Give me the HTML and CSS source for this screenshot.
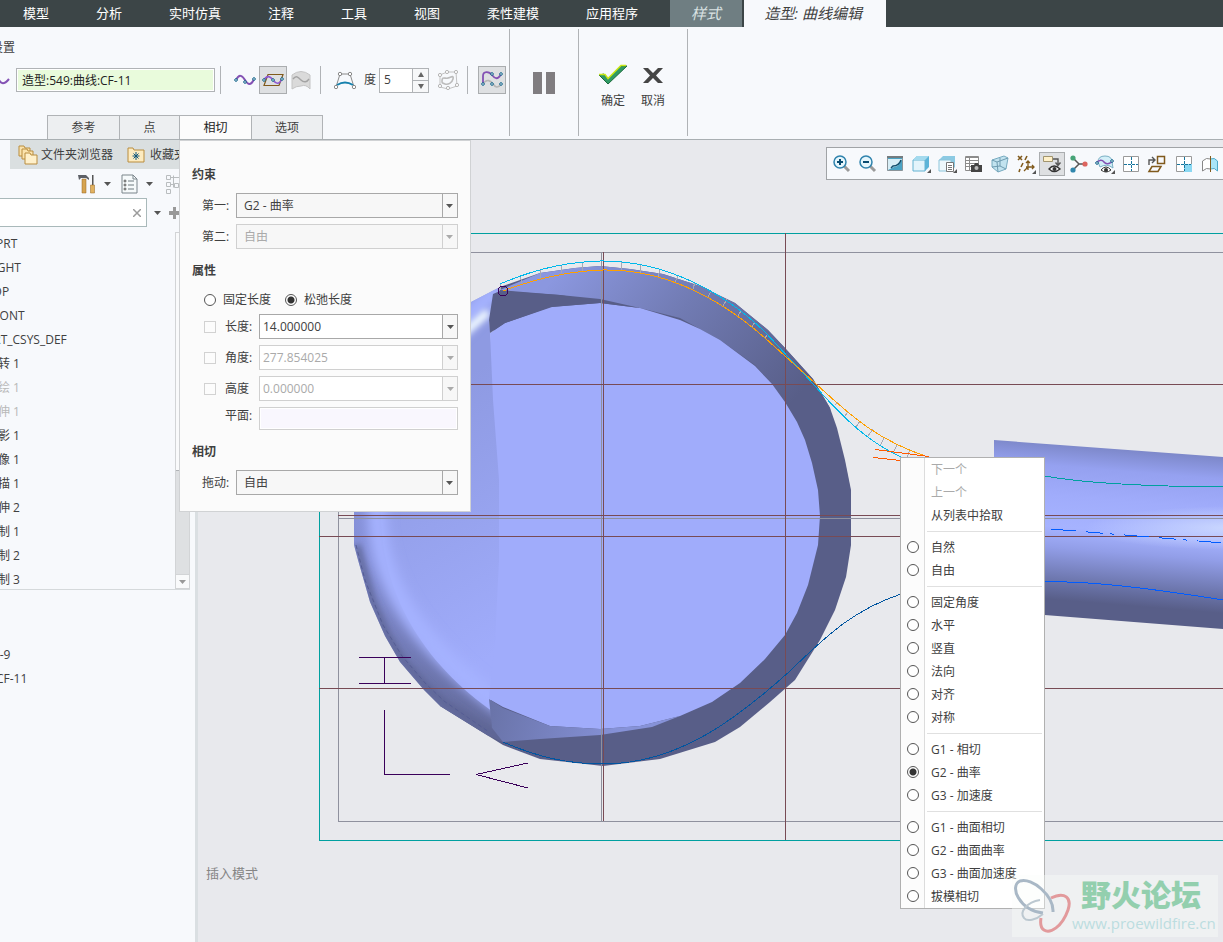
FILE: index.html
```html
<!DOCTYPE html>
<html lang="zh-CN">
  <head>
    <meta charset="UTF-8" />
    <meta name="viewport" content="width=device-width, initial-scale=1.0" />
    <title>造型: 曲线编辑</title>
    <link rel="stylesheet" href="styles.css">
  </head>
  <body>
    <nav class="menubar">
      <a href="#">模型</a>
      <a href="#">分析</a>
      <a href="#">实时仿真</a>
      <a href="#">注释</a>
      <a href="#">工具</a>
      <a href="#">视图</a>
      <a href="#">柔性建模</a>
      <a href="#">应用程序</a>
      <a href="#" class="style-tab">样式</a>
      <a href="#" class="current-tab">造型: 曲线编辑</a>
    </nav>

    <header class="ribbon">
      <div class="settings">
        <div class="caption">设置</div>
        <div class="tools">
          <svg class="lead" width="20" height="20" viewBox="0 0 20 20"><path d="M0 10c4-6 6-4 8 0s5 5 10-1" fill="none" stroke="#8452b4" stroke-width="2"/></svg>
          <input class="curve-name" type="text" value="造型:549:曲线:CF-11" aria-label="曲线" />
          <i class="sep"></i>
          <button class="tool" aria-label="自由曲线">
            <svg width="22" height="20" viewBox="0 0 22 20"><path d="M2 10c3-6 6-5 9 0s6 6 9-1" fill="none" stroke="#8452b4" stroke-width="2"/><g fill="#fff" stroke="#0a5f87"><circle cx="2" cy="10" r="1.3"/><circle cx="11" cy="12" r="1.3"/><circle cx="20" cy="9" r="1.3"/></g></svg>
          </button>
          <button class="tool on" aria-label="平面曲线">
            <svg width="22" height="20" viewBox="0 0 22 20"><path d="M2 15.500L6 4.500h15l-4 11z" fill="none" stroke="#805a1c" stroke-width="1.200"/><path d="M2 10c3-5 6-4 9 0s6 5 9-1" fill="none" stroke="#8c55d0" stroke-width="1.600"/><g fill="#fff" stroke="#0a5f87"><circle cx="2" cy="10" r="1.3"/><circle cx="11" cy="10" r="1.3"/><circle cx="20" cy="9" r="1.3"/></g></svg>
          </button>
          <button class="tool" aria-label="曲面上的曲线" disabled>
            <svg width="22" height="20" viewBox="0 0 22 20"><path d="M2 5q9-7 18 0v14q-4-5-9-3-5 0-9 3z" fill="#dadada" stroke="#c4c4c4"/><path d="M3 9c3-4 5-2 8 1s6 2 8-1" fill="none" stroke="#a3a3a3" stroke-width="1.4"/></svg>
          </button>
          <i class="sep"></i>
          <button class="tool" aria-label="控制点">
            <svg width="22" height="20" viewBox="0 0 22 20"><path d="M2 17L6 4h10l4 13" fill="none" stroke="#8a8a8a"/><path d="M3 15q8-5 16 0" fill="none" stroke="#1681ad" stroke-width="2"/><g fill="#fff" stroke="#888"><circle cx="2" cy="17" r="1.7"/><circle cx="6" cy="4" r="1.7"/><circle cx="16" cy="4" r="1.7"/><circle cx="20" cy="17" r="1.7"/></g></svg>
          </button>
          <label class="degree">度
            <span class="spin">
              <input type="text" value="5" />
              <span class="steps">
                <button aria-label="增加"><svg width="6" height="5"><path d="M3 0l3 5H0z"/></svg></button>
                <button aria-label="减少"><svg width="6" height="5"><path d="M0 0h6L3 5z"/></svg></button>
              </span>
            </span>
          </label>
          <button class="tool" aria-label="按比例更新" disabled>
            <svg width="22" height="20" viewBox="0 0 22 20"><path d="M3 5l7-3 9 0 1 14-9 3-8-2z" fill="none" stroke="#c3c3c3"/><path d="M5 11c0-5 3-2 6-3s6-3 5 1-5 6-8 5-3-1-3-3z" fill="none" stroke="#bcbcbc" stroke-width="1.6"/><g fill="#fff" stroke="#b5b5b5"><circle cx="3" cy="5" r="1.6"/><circle cx="10" cy="2" r="1.6"/><circle cx="19" cy="2" r="1.6"/><circle cx="20" cy="15" r="1.6"/><circle cx="11" cy="18" r="1.6"/><circle cx="3" cy="16" r="1.6"/></g></svg>
          </button>
          <i class="sep"></i>
          <button class="tool on last" aria-label="编辑曲线">
            <svg width="22" height="20" viewBox="0 0 22 20"><path d="M2 14c4-6 8-3 10 0s5 5 8 0" fill="none" stroke="#b5b5b5" stroke-width="1.6"/><path d="M2 13V6c0-5 6-5 9-1s6 5 9-1" fill="none" stroke="#8452b4" stroke-width="1.8"/><g fill="#fff" stroke="#0a5f87"><circle cx="2" cy="14" r="1.3"/><circle cx="11" cy="4" r="1.3"/><circle cx="20" cy="4" r="1.3"/><circle cx="11" cy="14" r="1.3"/><circle cx="20" cy="14" r="1.3"/></g></svg>
          </button>
        </div>
        <div class="tabs">
          <button>参考</button>
          <button class="narrow">点</button>
          <button class="active">相切</button>
          <button>选项</button>
        </div>
      </div>
      <div class="pause">
        <button class="plain" aria-label="暂停"><svg width="22" height="22"><path d="M0 0h9v22H0zM13 0h9v22h-9z" fill="#807d80"/></svg></button>
      </div>
      <div class="finish">
        <button class="plain">
          <svg width="30" height="22" viewBox="0 0 30 22"><path d="M1 11l5-1 4 5L23 2h6L10 20z" fill="#2f9a64" stroke="#1c6b3c"/><path d="M1 10.500h6l3 4L23 1.500h5" fill="none" stroke="#c8e614" stroke-width="1.500"/></svg>
          确定
        </button>
        <button class="plain">
          <svg width="30" height="22" viewBox="0 0 30 22"><path d="M5 4h5l5 5 5-5h5l-7 7.500 7 7.500h-5l-5-5-5 5H5l7-7.500z" fill="#454545"/></svg>
          取消
        </button>
      </div>
    </header>

    <main>
      <aside class="sidebar">
        <div class="side-tabs">
          <a href="#">
            <svg width="20" height="20" viewBox="0 0 20 20"><g fill="#fbe3ad" stroke="#b98d3e"><path d="M1 2V1h5l1 2h5v8H1z"/><path d="M4 6V4h5l1 2h5v8H4z"/><path d="M7 10V8h5l1 2h6v9H7z" fill="#fff0ca"/></g></svg>
            文件夹浏览器
          </a>
          <a href="#" class="fav">
            <svg width="18" height="16" viewBox="0 0 18 16"><path d="M1 2V1h5l1 2h10v12H1z" fill="#fdebc0" stroke="#b98d3e"/><path d="M9 5v8M5.500 9h7M6.500 6.500l5 5M11.500 6.500l-5 5" stroke="#10567c"/></svg>
            收藏夹
          </a>
        </div>
        <div class="side-tools">
          <button class="plain" aria-label="设置">
            <svg width="18" height="20" viewBox="0 0 18 20"><path d="M0 1h8l3 3v2L8 4H3L1 6z" fill="#5d6066"/><path d="M4 5h4v14H4z" fill="#d6a450" stroke="#946622" stroke-width="0.500"/><path d="M14 1h1.500v10H14z" fill="#555"/><path d="M12.500 11h4v8h-4z" fill="#e2b260" stroke="#946622" stroke-width="0.500"/></svg>
            <svg class="arrow" width="7" height="4"><path d="M0 0h7L3.500 4z"/></svg>
          </button>
          <button class="plain" aria-label="显示">
            <svg width="17" height="20" viewBox="0 0 17 20"><path d="M1 1h11l4 4v14H1z" fill="#f6fafb" stroke="#7b858b"/><path d="M12 1v4h4" fill="none" stroke="#7b858b"/><path d="M7 7h6M7 11h6M7 15h6" stroke="#6f7b80"/><g fill="none" stroke="#555"><circle cx="4" cy="7" r="1"/><circle cx="4" cy="11" r="1"/><circle cx="4" cy="15" r="1"/></g></svg>
            <svg class="arrow" width="7" height="4"><path d="M0 0h7L3.500 4z"/></svg>
          </button>
          <svg width="18" height="20" viewBox="0 0 18 20"><g fill="none" stroke="#b9bdbf"><path d="M3.500 1.500h4v4h-4zM3.500 8.500h4v4h-4zM3.500 15.500h4v4h-4zM11.500 9.500h4v4h-4zM10.500 1.500v12M7.500 3.500h10M7.500 10.500h4"/></g></svg>
        </div>
        <div class="search">
          <div class="search-box">
            <input type="text" aria-label="搜索" />
            <button class="plain" aria-label="清除"><svg width="8" height="8"><path d="M0 0l8 8M8 0l-8 8" stroke="#9c9c9c" stroke-width="1.500"/></svg></button>
          </div>
          <svg class="arrow" width="7" height="4"><path d="M0 0h7L3.500 4z"/></svg>
          <svg width="12" height="12"><path d="M5 0h3v4h4v4H8v4H5V8H1V4h4z" fill="#999"/></svg>
        </div>
        <div class="tree">
          <ul>
            <li class="root">PRT</li>
            <li>RIGHT</li>
            <li>TOP</li>
            <li>FRONT</li>
            <li>PRT_CSYS_DEF</li>
            <li>旋转 1</li>
            <li class="dim">草绘 1</li>
            <li class="dim">拉伸 1</li>
            <li>投影 1</li>
            <li>镜像 1</li>
            <li>扫描 1</li>
            <li>拉伸 2</li>
            <li>复制 1</li>
            <li>复制 2</li>
            <li>复制 3</li>
          </ul>
          <div class="scrollbar">
            <i class="thumb"></i>
            <button aria-label="向下滚动"><svg class="arrow" width="7" height="4"><path d="M0 0h7L3.500 4z"/></svg></button>
          </div>
        </div>
        <ul class="curves">
          <li>CF-9</li>
          <li class="root">CF-11</li>
        </ul>
      </aside>

      <section class="canvas">
        <svg class="scene" viewBox="198 140 1025 802" preserveAspectRatio="xMinYMin slice">
          <defs>
            <linearGradient id="band" gradientUnits="userSpaceOnUse" x1="560" y1="270" x2="760" y2="440">
              <stop offset="0" stop-color="#8b97df"/>
              <stop offset="0.450" stop-color="#717bb3"/>
              <stop offset="1" stop-color="#585e88"/>
            </linearGradient>
            <linearGradient id="rim" gradientUnits="userSpaceOnUse" x1="0" y1="280" x2="0" y2="745">
              <stop offset="0" stop-color="#8995dc"/>
              <stop offset="0.600" stop-color="#8590d8"/>
              <stop offset="1" stop-color="#5f6694"/>
            </linearGradient>
            <linearGradient id="left" gradientUnits="userSpaceOnUse" x1="390" y1="420" x2="520" y2="640">
              <stop offset="0" stop-color="#8e9ae2"/>
              <stop offset="1" stop-color="#a0acfb"/>
            </linearGradient>
            <linearGradient id="wedge" gradientUnits="userSpaceOnUse" x1="489" y1="705" x2="620" y2="735">
              <stop offset="0" stop-color="#6973a8"/>
              <stop offset="1" stop-color="#8692d8"/>
            </linearGradient>
            <linearGradient id="handle" gradientUnits="userSpaceOnUse" x1="1130" y1="449" x2="1116" y2="622">
              <stop offset="0" stop-color="#7c87c8"/>
              <stop offset="0.130" stop-color="#95a1f0"/>
              <stop offset="0.300" stop-color="#a0acfb"/>
              <stop offset="0.480" stop-color="#a6b3ff"/>
              <stop offset="0.600" stop-color="#929ee8"/>
              <stop offset="0.820" stop-color="#666fa2"/>
              <stop offset="0.900" stop-color="#585e88"/>
            </linearGradient>
            <radialGradient id="shine">
              <stop offset="0" stop-color="#cbd8ff"/>
              <stop offset="1" stop-color="#cbd8ff" stop-opacity="0"/>
            </radialGradient>
            <filter id="soft" x="-30%" y="-30%" width="160%" height="160%"><feGaussianBlur stdDeviation="6"/></filter>
            <filter id="glow" x="-60%" y="-60%" width="220%" height="220%"><feGaussianBlur stdDeviation="3"/></filter>
            <clipPath id="body"><path d="M354 545V490L363 445 385 390 420 342 471 302 500 287 489 320 502 480V560L491 700 492 728 503 742 487 735 440 706 424 690 400 662 385 636 370 602 358 560z"/></clipPath>
            <clipPath id="tube"><path d="M994 440L1223 457V629L994 611z"/></clipPath>
          </defs>

          <!-- disc -->
          <path d="M500 287L540 273 575 268 600 266 630 269 663 274 700 286 735 303 768 330 785 348 813 379 830 408 837 428 845 460 851 490V545L846 577 835 610 820 640 795 680 770 702 740 727 715 742 660 759 603 766 540 759 503 745 440 706z" fill="#585e88"/>
          <path d="M500 290L540 273 575 268 600 266 630 269 663 274 700 286 735 303 768 330 785 348 813 379 830 408 835 440H790L772 384 755 365 720 340 680 318 640 308 560 295z" fill="url(#band)"/>
          <path d="M354 545V490L363 445 385 390 420 342 471 302 500 287 489 320 502 480V560L491 700 492 728 503 742 487 735 440 706 424 690 400 662 385 636 370 602 358 560z" fill="url(#rim)"/>
          <g clip-path="url(#body)">
            <path d="M520 285C420 350 382 430 381 516C382 600 430 675 512 724L520 600V400z" fill="url(#left)"/>
            <path d="M500 288C410 360 378 430 377 516C379 590 424 650 505 708" fill="none" stroke="#a5b2ff" stroke-width="19" filter="url(#soft)"/>
            <path d="M488 312L456 340" stroke="#f2fbff" stroke-width="8" filter="url(#glow)"/>
            <path d="M357 545L372 600 387 634 402 659 426 686 444 702 489 731 515 745" fill="none" stroke="#5d6594" stroke-width="6" filter="url(#glow)"/>
            <path d="M356 545L365 580 383 625 402 656 426 684 444 701 489 732" fill="none" stroke="#555d94" stroke-dasharray="4 3"/>
          </g>
          <path d="M490 333L505 323 550 307 600 303 640 308 680 320 700 329 720 340 755 366 772 384 785 402 797 422 805 440 812 463 818 490 820 516 818 545 808 585 797 613 785 635 765 659 740 683 712 702 680 716 640 726 600 729 550 726 503 707 489 699 495 640 499 560V480L493 400z" fill="#a0acfb"/>
          <path d="M493 294L500 291 560 295 600 299 640 308 600 303 552 307 505 323 490 333 489 320z" fill="#585e88"/>
          <path d="M489 699L503 708 550 726 600 729 640 726 680 716 652 727 600 735 540 739 503 742 492 728z" fill="url(#wedge)"/>

          <!-- handle -->
          <path d="M994 440L1223 457V629L994 611z" fill="url(#handle)"/>
          <g clip-path="url(#tube)"><ellipse cx="1235" cy="528" rx="150" ry="22" fill="url(#shine)"/></g>

          <!-- datum planes -->
          <g class="datum">
            <path d="M1223 233.500H319.500V840.500H1223" stroke="#00a0a0"/>
            <path d="M1223 252.500H338.500V821.500H1223M601.500 252V821M338 518.500H1223" stroke="#8f919e"/>
            <path d="M319 384.500H1223M319 536.500H1223M319 688.500H1223M338 515.500H1223M603.500 252V821M785.500 233V840" stroke="#784b55"/>
            <path d="M359 657.500H411M359 683.500H411M384.500 658V683M384.500 710V774.500H450M528 763L476 774.500 528 788" stroke="#3a005a"/>
          </g>

          <!-- curves -->
          <g class="curve">
            <path d="M503 742C540 758 570 764 603 764C680 764 740 716 790 671C830 632 856 609 901 594" stroke="#0055a0"/>
            <path d="M1045 476Q1100 486 1223 487" stroke="#00a0a0"/>
            <path d="M1051 529L1223 543" stroke="#005cff" stroke-dasharray="25 10 17 7 4 10"/>
            <path d="M1045 582Q1100 580 1223 600" stroke="#005cff"/>
            <path d="M500 284V290M520 276L522 283M540 270L541 278M561 266V273M582 263V271M621 262V271M641 265L640 273M660 269L658 277M678 275L675 283M695 282L693 289M711 291L708 297M727 299L723 306M741 311L738 316M755 322L752 327M768 334L765 338M838 402L835 405M848 412L845 416M860 421L856 427M873 429L868 436M884 438L880 446M897 445L893 453M910 450L907 457" stroke="#a8a8b4"/>
            <path d="M500 284C540 267 570 262 600 261C665 260 725 293 765 332L815 386C845 420 870 443 901 457" stroke="#00b9eb"/>
            <path d="M503 291C540 277 570 271 603 270C670 269 725 303 765 338L815 383C855 420 880 441 928 457" stroke="#ffa000"/>
            <path d="M875 449.500L929 456.500M873 457.500L901 460.500" stroke="#ff5a00"/>
            <circle cx="503" cy="291" r="5" stroke="#3a005a"/>
          </g>
        </svg>

        <p class="mode">插入模式</p>

        <div class="view-tools">
          <button aria-label="放大"><svg viewBox="0 0 20 20"><path d="M11 11l6 6" stroke="#9a9a9a" stroke-width="3"/><circle cx="8" cy="8" r="6" fill="#e6f6fc" stroke="#2f83ad" stroke-width="1.500"/><path d="M5 8h6M8 5v6" stroke="#094c70" stroke-width="2"/></svg></button>
          <button aria-label="缩小"><svg viewBox="0 0 20 20"><path d="M11 11l6 6" stroke="#9a9a9a" stroke-width="3"/><circle cx="8" cy="8" r="6" fill="#e6f6fc" stroke="#2f83ad" stroke-width="1.500"/><path d="M5 8h6" stroke="#094c70" stroke-width="2"/></svg></button>
          <button aria-label="重画"><svg viewBox="0 0 20 20"><path d="M2.500 2.500h15v14h-15z" fill="#4ba3c4" stroke="#8b9499"/><path d="M3 5h14q-2 7-8 8l-6 3z" fill="#d8eef6"/><path d="M2 2h16v2H2z" fill="#747c80"/><path d="M16 6q-2 6-8 6l-2 2" fill="none" stroke="#14506d" stroke-width="1.500"/></svg></button>
          <button aria-label="显示样式"><svg viewBox="0 0 20 20"><path d="M2 6l4-4h12v11l-4 4H2z" fill="#5db4d8"/><path d="M2 6h12v11H2z" fill="#e3f4fb" stroke="#65b3d2"/><path d="M2 6l4-4h12l-4 4z" fill="#a4daee"/><path d="M20 15v4h-4z" fill="#555"/></svg></button>
          <button aria-label="已保存方向"><svg viewBox="0 0 20 20"><path d="M2 6l4-4h12v11l-4 4H2z" fill="#8ccae3"/><path d="M2 6h12v11H2z" fill="#eef8fc" stroke="#8cc5db"/><path d="M9.500 8.500h7v9h-7z" fill="#fff" stroke="#777"/><path d="M11 11.500h4M11 13.500h4M11 15.500h4" stroke="#777"/><path d="M20 15v4h-4z" fill="#555"/></svg></button>
          <button aria-label="视图管理器"><svg viewBox="0 0 20 20"><path d="M2.500 2.500h13v14h-13z" fill="#fff" stroke="#8c8c8c"/><path d="M2 3.500h14M2 6.500h14M2 9.500h14M2 12.500h14M6.500 2v14" stroke="#8c8c8c"/><path d="M8 11h3l1-2h3l1 2h3v7H8z" fill="#444"/><circle cx="13.500" cy="14" r="2" fill="#bbb"/></svg></button>
          <button aria-label="透视图"><svg viewBox="0 0 20 20"><path d="M2 6l12-4 4 2-2 11-8 3-6-5z" fill="#c2e3ef" stroke="#77abc0"/><path d="M2 6l5 2 11-4M7 8l1 10M10 4v8l6 3M2 13l8-1" fill="none" stroke="#6e9bb0"/></svg></button>
          <button aria-label="基准显示"><svg viewBox="0 0 20 20"><path d="M2 2l4 4M6 2L2 6M11 2l-2 4M7 9l-2 4M4 15l-1 3" stroke="#805a1c" stroke-width="1.600"/><path d="M12 8v8M10 13h8M12 13l-4 4M10 9l2-2 2 2M16 11l2 2-2 2" fill="none" stroke="#805a1c" stroke-width="1.300"/><path d="M20 16v4h-4z" fill="#555"/></svg></button>
          <button class="on" aria-label="注释显示"><svg viewBox="0 0 20 20"><path d="M1.500 2.500h9v5h-9z" fill="#fff1c9" stroke="#a1956f"/><path d="M11 5h5v6M13.500 8.500l2.500 3 2.500-3" fill="none" stroke="#555" stroke-width="1.400"/><path d="M7 15q5-6 11 0-6 5-11 0z" fill="#fff" stroke="#333" stroke-width="1.400"/><circle cx="12.500" cy="15" r="2" fill="#333"/></svg></button>
          <button aria-label="旋转中心"><svg viewBox="0 0 20 20"><path d="M4 4l6 6h7M10 10l-6 6" fill="none" stroke="#555" stroke-width="1.500"/><circle cx="4" cy="4" r="2.600" fill="#46a477"/><circle cx="4" cy="16" r="2.600" fill="#3187ad"/><circle cx="16" cy="10" r="2.600" fill="#dd655f"/></svg></button>
          <button aria-label="曲线显示"><svg viewBox="0 0 20 20"><path d="M3 8q0-6 7-6t7 6l1 6q-6-5-13-1z" fill="#d3eff8" stroke="#79afc4"/><path d="M1 9q5-5 8-1t9-1" fill="none" stroke="#8452b4" stroke-width="1.600"/><g fill="#fff" stroke="#0a5f87"><circle cx="2" cy="9" r="1.300"/><circle cx="17" cy="7" r="1.300"/></g><path d="M6 16q5-6 10 0-5 4-10 0z" fill="#fff" stroke="#333"/><circle cx="11" cy="16" r="2" fill="#333"/><path d="M20 16v4h-4z" fill="#555"/></svg></button>
          <button aria-label="四视图"><svg viewBox="0 0 20 20"><path d="M2.500 2.500h15v15h-15z" fill="#fff" stroke="#9a9a9a"/><path d="M10.500 3v14M3 10.500h14" stroke="#17759d" stroke-dasharray="3 1"/></svg></button>
          <button aria-label="活动平面方向"><svg viewBox="0 0 20 20"><path d="M10.500 2.500h7v7h-7zM2 17.500l3-5h9l-3 5z" fill="none" stroke="#805a1c" stroke-width="1.500"/><path d="M2 11V6h5M5 3l3 3-3 3" fill="none" stroke="#555" stroke-width="1.400"/></svg></button>
          <button aria-label="活动视图"><svg viewBox="0 0 20 20"><path d="M2.500 2.500h15v15h-15z" fill="#fff" stroke="#9a9a9a"/><path d="M10 10h8v8h-8z" fill="#8bd8f2"/><path d="M10.500 3v14M3 10.500h14" stroke="#17759d" stroke-dasharray="3 1"/></svg></button>
          <button aria-label="镜像"><svg viewBox="0 0 20 20"><path d="M2.500 7q4-4 8-2v10q-4-2-8 2z" fill="#fff" stroke="#888"/><path d="M10.500 5q4-2 7 2v10q-3-4-7-2z" fill="#a9e5f8" stroke="#4ea9c8"/><path d="M10.500 2v16" stroke="#805a1c"/></svg></button>
        </div>

        <div class="context-menu">
          <button disabled>下一个</button>
          <button disabled>上一个</button>
          <button>从列表中拾取</button>
          <hr />
          <label><input type="radio" name="constraint" />自然</label>
          <label><input type="radio" name="constraint" />自由</label>
          <hr />
          <label><input type="radio" name="constraint" />固定角度</label>
          <label><input type="radio" name="constraint" />水平</label>
          <label><input type="radio" name="constraint" />竖直</label>
          <label><input type="radio" name="constraint" />法向</label>
          <label><input type="radio" name="constraint" />对齐</label>
          <label><input type="radio" name="constraint" />对称</label>
          <hr />
          <label><input type="radio" name="constraint" />G1 - 相切</label>
          <label><input type="radio" name="constraint" checked />G2 - 曲率</label>
          <label><input type="radio" name="constraint" />G3 - 加速度</label>
          <hr />
          <label><input type="radio" name="constraint" />G1 - 曲面相切</label>
          <label><input type="radio" name="constraint" />G2 - 曲面曲率</label>
          <label><input type="radio" name="constraint" />G3 - 曲面加速度</label>
          <label><input type="radio" name="constraint" />拔模相切</label>
        </div>

        <div class="watermark">
          <svg width="60" height="58" viewBox="0 0 60 58">
            <g fill="none">
              <path d="M41 34C42 18 20 -1 8 3C-3 8 7 32 31 35" stroke="#a9b8c6" stroke-width="3"/>
              <path d="M28 22C15 24 7 34 12 40C15 44 24 42 31 36" stroke="#bcc8d0" stroke-width="2"/>
              <path d="M39 20C53 13 60 20 56 32C50 49 38 56 32 52C29 50 28 46 29 40" stroke="#e29a9c" stroke-width="3"/>
            </g>
          </svg>
          <div>
            <strong>野火论坛</strong>
            <span>www.proewildfire.cn</span>
          </div>
        </div>
      </section>

      <form class="popup">
        <h2>约束</h2>
        <div class="row">
          <label for="first">第一:</label>
          <select id="first"><option>G2 - 曲率</option></select>
        </div>
        <div class="row">
          <label for="second">第二:</label>
          <select id="second" disabled><option>自由</option></select>
        </div>
        <h2>属性</h2>
        <div class="radios">
          <label><input type="radio" name="len" />固定长度</label>
          <label><input type="radio" name="len" checked />松弛长度</label>
        </div>
        <div class="row prop">
          <input type="checkbox" aria-label="锁定长度" disabled />
          <label for="length">长度:</label>
          <span class="combo"><input id="length" type="text" value="14.000000" /><button type="button" aria-label="选择长度"><svg class="arrow" width="7" height="4"><path d="M0 0h7L3.500 4z"/></svg></button></span>
        </div>
        <div class="row prop">
          <input type="checkbox" aria-label="锁定角度" disabled />
          <label for="angle">角度:</label>
          <span class="combo off"><input id="angle" type="text" value="277.854025" disabled /><button type="button" aria-label="选择角度" disabled><svg class="arrow" width="7" height="4"><path d="M0 0h7L3.500 4z"/></svg></button></span>
        </div>
        <div class="row prop">
          <input type="checkbox" aria-label="锁定高度" disabled />
          <label for="height">高度</label>
          <span class="combo off"><input id="height" type="text" value="0.000000" disabled /><button type="button" aria-label="选择高度" disabled><svg class="arrow" width="7" height="4"><path d="M0 0h7L3.500 4z"/></svg></button></span>
        </div>
        <div class="row prop plane">
          <label for="plane">平面:</label>
          <input id="plane" type="text" disabled />
        </div>
        <h2>相切</h2>
        <div class="row">
          <label for="drag">拖动:</label>
          <select id="drag"><option>自由</option></select>
        </div>
      </form>
    </main>
  </body>
</html>
```

FILE: styles.css
```css
* {
  box-sizing: border-box;
}

body {
  margin: 0;
  height: 100vh;
  display: flex;
  flex-direction: column;
  overflow: hidden;
  background: #f7f9fc;
  color: #404040;
  font: 12px/18px "Open Sans", "Noto Sans CJK SC", sans-serif;
}

button,
input,
select {
  font: inherit;
  color: inherit;
  margin: 0;
  padding: 0;
  border-radius: 0;
}

svg {
  display: block;
  flex: none;
}

ul {
  list-style: none;
  margin: 0;
  padding: 0;
}

.arrow {
  fill: #555;
}

.plain {
  border: none;
  background: none;
}

/* menu bar */
.menubar {
  display: flex;
  flex: none;
  height: 27px;
  gap: 47px;
  padding-left: 23px;
  background: #3c4547;
  font-size: 13px;
  line-height: 26px;
  white-space: nowrap;
}

.menubar a {
  color: #fff;
  text-decoration: none;
}

.menubar .style-tab,
.menubar .current-tab {
  font-size: 15px;
  font-style: italic;
  text-align: center;
}

.menubar .style-tab {
  width: 72px;
  margin-left: -15px;
  background: #6f7e82;
  color: #d9e2e3;
}

.menubar .current-tab {
  width: 142px;
  margin-left: -45px;
  padding-right: 4px;
  background: #f7f9fc;
  color: #404040;
}

/* ribbon */
.ribbon {
  display: flex;
  flex: none;
  height: 113px;
  border-bottom: 1px solid #a9afb2;
}

.settings {
  width: 509px;
  display: flex;
  flex-direction: column;
  overflow: hidden;
}

.caption {
  margin: 12px 0 0 -9px;
  height: 18px;
}

.tools {
  display: flex;
  align-items: center;
  height: 28px;
  margin-top: 9px;
}

.lead {
  margin: 0 5px 0 -9px;
}

.curve-name {
  width: 199px;
  height: 24px;
  padding: 0 5px;
  border: 1px solid #b0b3b6;
  box-shadow: inset 0 0 0 1px #fff;
  background: #e9fbdc;
  color: #222;
}

.sep {
  width: 1px;
  height: 28px;
  margin: 0 5px;
  background: #b0b3b6;
}

.sep + .tool:not(.on) {
  margin-left: 5px;
}

.tool {
  width: 28px;
  height: 28px;
  display: flex;
  align-items: center;
  justify-content: center;
  border: 1px solid transparent;
  background: none;
}

.tool.on {
  border-color: #aaadaf;
  background: #dee0e2;
}

.tool.last {
  margin-left: 5px;
}

.degree {
  display: flex;
  align-items: center;
  gap: 3px;
  margin: 0 5px;
}

.spin {
  display: flex;
  width: 50px;
  height: 25px;
  border: 1px solid #b0b3b6;
  background: #fff;
}

.spin input {
  flex: 1;
  min-width: 0;
  padding-left: 4px;
  border: none;
}

.steps {
  width: 16px;
  display: flex;
  flex-direction: column;
  border-left: 1px solid #b0b3b6;
}

.steps button {
  flex: 1;
  display: flex;
  align-items: center;
  justify-content: center;
  border: none;
  background: #f7f8f9;
  fill: #666;
}

.steps button + button {
  border-top: 1px solid #b0b3b6;
}

.tabs {
  display: flex;
  flex: none;
  height: 24px;
  margin: auto 0 0 47px;
}

.tabs button {
  width: 72px;
  border: 1px solid #b0b3b6;
  border-bottom: none;
  border-right: none;
  background: #edeff1;
}

.tabs .narrow {
  width: 60px;
}

.tabs .active {
  background: #fcfcfc;
  color: #222;
}

.tabs button:last-child {
  border-right: 1px solid #b0b3b6;
}

.pause,
.finish {
  display: flex;
  justify-content: center;
  margin: 2px 0 3px;
  border-left: 1px solid #b0b3b6;
}

.pause {
  width: 69px;
  align-items: center;
}

.finish {
  width: 110px;
  gap: 10px;
  padding-top: 35px;
  align-items: flex-start;
  border-right: 1px solid #b0b3b6;
}

.finish .plain {
  display: flex;
  flex-direction: column;
  align-items: center;
  gap: 6px;
}

/* work area */
main {
  flex: 1;
  min-height: 0;
  display: flex;
  position: relative;
}

.sidebar {
  flex: none;
  width: 198px;
  overflow: hidden;
  border-right: 3px solid #dadfe2;
  white-space: nowrap;
}

.side-tabs {
  display: flex;
  height: 29px;
  margin-left: 10px;
  padding-left: 8px;
  gap: 14px;
  overflow: hidden;
  background: #dadfe0;
}

.side-tabs a {
  display: flex;
  flex: none;
  align-items: center;
  gap: 3px;
  color: inherit;
  text-decoration: none;
}

.side-tabs .fav {
  gap: 5px;
}

.side-tools {
  display: flex;
  align-items: center;
  gap: 10px;
  height: 29px;
  padding-left: 78px;
}

.side-tools .plain {
  display: flex;
  align-items: center;
  gap: 8px;
}

.search {
  display: flex;
  align-items: center;
  gap: 7px;
}

.search-box {
  display: flex;
  width: 147px;
  height: 29px;
  padding-right: 5px;
  border: 1px solid #a9b9ba;
  border-left: none;
  background: #fff;
}

.search-box input {
  flex: 1;
  min-width: 0;
  border: none;
}

.tree {
  display: flex;
  width: 190px;
  padding-top: 5px;
  border-bottom: 1px solid #d5d9db;
}

.tree ul {
  flex: 1;
  margin-bottom: -3px;
}

.tree li,
.curves li {
  height: 24px;
  margin-left: -14px;
  line-height: 24px;
}

.tree .root,
.curves .root {
  margin-left: -4px;
}

.tree .dim {
  color: #b8b8b8;
}

.scrollbar {
  width: 15px;
  display: flex;
  flex-direction: column;
  justify-content: space-between;
  border: 1px solid #d2d4d6;
  background: #dee0e2;
}

.thumb {
  height: 67%;
  border-bottom: 1px solid #b0b3b6;
  background: #f9fafb;
}

.scrollbar button {
  display: flex;
  align-items: center;
  justify-content: center;
  height: 14px;
  border: none;
  border-top: 1px solid #d2d4d6;
  background: #f9fafb;
}

.scrollbar .arrow {
  fill: #999;
}

.curves {
  padding-top: 53px;
}

.canvas {
  flex: 1;
  min-width: 0;
  position: relative;
  overflow: hidden;
  background: #e8e9ed;
}

.scene {
  width: 100%;
  height: 100%;
}

.datum,
.curve {
  fill: none;
  shape-rendering: crispEdges;
}

.mode {
  position: absolute;
  left: 8px;
  top: 723px;
  margin: 0;
  font-size: 13px;
  line-height: 20px;
  color: #858585;
}

.view-tools {
  position: absolute;
  left: 628px;
  right: 0;
  top: 7px;
  height: 33px;
  display: flex;
  align-items: center;
  padding-left: 2px;
  border: 1px solid #a0a3a6;
  border-right: none;
  background: #f7f9fc;
}

.view-tools button {
  flex: 1;
  height: 24px;
  display: flex;
  align-items: center;
  justify-content: center;
  padding: 0;
  border: 1px solid transparent;
  background: none;
}

.view-tools .on {
  border-color: #aaadaf;
  background: #dee0e2;
}

.view-tools svg {
  width: 20px;
  height: 20px;
}

/* context menu */
.context-menu {
  position: absolute;
  left: 702px;
  top: 317px;
  width: 145px;
  border: 1px solid #b0b0b0;
  background: linear-gradient(to right, #fcfcfc 23px, #dcdcdc 23px, #dcdcdc 24px, #fff 24px);
}

.context-menu label,
.context-menu button {
  display: flex;
  align-items: center;
  width: 100%;
  height: 23px;
  padding-left: 6px;
  border: none;
  background: none;
}

.context-menu button {
  padding-left: 30px;
}

.context-menu button:disabled {
  color: #aaa;
}

.context-menu input {
  margin: 0 12px 1px 0;
}

.context-menu hr {
  height: 1px;
  margin: 4px 2px 4px 26px;
  border: none;
  background: #e0e0e0;
}

input[type="radio"] {
  appearance: none;
  flex: none;
  width: 12px;
  height: 12px;
  border: 1px solid #555;
  border-radius: 50%;
  background: #fff;
}

input[type="radio"]:checked {
  background: radial-gradient(circle, #333 3px, #fff 4px);
}

input[type="checkbox"] {
  appearance: none;
  width: 12px;
  height: 12px;
  border: 1px solid #d2d2d2;
  background: #fcfcfc;
}

.watermark {
  position: absolute;
  left: 814px;
  top: 735px;
  display: flex;
  width: 206px;
  height: 62px;
  padding-top: 3px;
  background: rgba(250, 252, 250, 0.4);
  pointer-events: none;
}

.watermark div {
  display: flex;
  flex-direction: column;
}

.watermark strong {
  margin-left: 9px;
  color: #93cfae;
  font-size: 30px;
  line-height: 34px;
  font-weight: 900;
}

.watermark span {
  color: #bcdde0;
  font-size: 15px;
  line-height: 22px;
}

/* tangent panel */
.popup {
  position: absolute;
  left: 179px;
  top: 0;
  width: 292px;
  padding: 25px 12px 10px;
  border: 1px solid #d0d2d4;
  background: #fbfbfb;
}

.popup h2 {
  margin: 0 0 9px;
  font-size: 12px;
  line-height: 18px;
}

.popup .row + h2 {
  margin-top: 13px;
}

.row {
  display: flex;
  align-items: center;
  height: 25px;
  margin-bottom: 6px;
}

.row label {
  width: 34px;
  margin-left: 10px;
}

.row select {
  flex: 1;
  height: 25px;
  padding-left: 7px;
  appearance: none;
  border: 1px solid #a8a8a8;
  background: #f7f7f7 url("data:image/svg+xml,%3Csvg xmlns='http://www.w3.org/2000/svg' width='15' height='23'%3E%3Cpath d='M0 0h1v23H0z' fill='%23a8a8a8'/%3E%3Cpath d='M4 10h7l-3.500 4z' fill='%23555'/%3E%3C/svg%3E") right center no-repeat;
}

.row select:disabled {
  opacity: 1;
  border-color: #d0d0d0;
  color: #aaa;
  background-image: url("data:image/svg+xml,%3Csvg xmlns='http://www.w3.org/2000/svg' width='15' height='23'%3E%3Cpath d='M0 0h1v23H0z' fill='%23d0d0d0'/%3E%3Cpath d='M4 10h7l-3.500 4z' fill='%23aaa'/%3E%3C/svg%3E");
}

.radios {
  display: flex;
  gap: 14px;
  height: 20px;
  margin: 10px 0 4px 12px;
}

.radios label {
  display: flex;
  align-items: center;
  gap: 7px;
}

.prop {
  padding-left: 12px;
}

.prop label {
  margin-left: 9px;
}

.combo {
  flex: 1;
  display: flex;
  height: 25px;
  border: 1px solid #a8a8a8;
  background: #fff;
}

.combo input {
  flex: 1;
  min-width: 0;
  padding-left: 3px;
  border: none;
  background: none;
}

.combo button {
  width: 15px;
  display: flex;
  align-items: center;
  justify-content: center;
  border: none;
  border-left: 1px solid #a8a8a8;
  background: #f7f7f7;
}

.combo.off,
.combo.off button {
  border-color: #d0d0d0;
  color: #aaa;
}

.combo.off .arrow {
  fill: #aaa;
}

.plane {
  align-items: flex-start;
  height: 23px;
  padding-left: 24px;
}

.plane input {
  flex: 1;
  min-width: 0;
  height: 23px;
  border: 1px solid #d0d0d0;
  box-shadow: inset 0 0 0 1px #fff;
  background: #f9f7fe;
}
```
